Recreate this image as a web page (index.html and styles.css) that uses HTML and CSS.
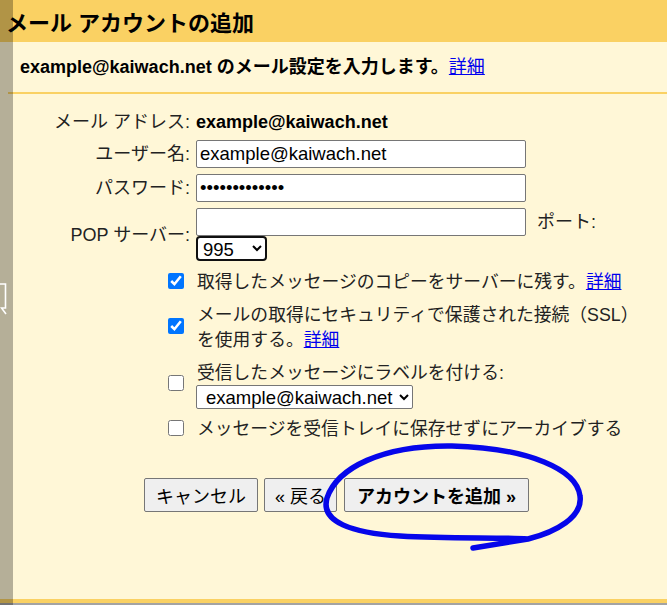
FILE: index.html
```html
<!DOCTYPE html>
<html lang="ja">
<head>
<meta charset="utf-8">
<title>メール アカウントの追加</title>
<link rel="stylesheet" href="styles.css">
</head>
<body>
<div class="page">
  <header class="title-bar"><h1>メール アカウントの追加</h1></header>
  <div class="intro">example@kaiwach.net のメール設定を入力します。<a href="#">詳細</a></div>
  <main class="content">
    <div class="fields">
      <div class="label">メール アドレス:</div>
      <div class="value">example@kaiwach.net</div>
      <label class="label" for="user">ユーザー名:</label>
      <div><input id="user" class="text" type="text" value="example@kaiwach.net"></div>
      <label class="label" for="pass">パスワード:</label>
      <div><input id="pass" class="text" type="password" value="abcdefghijklm"></div>
      <label class="label" for="server">POP サーバー:</label>
      <div class="server-cell">
        <div class="server-line"><input id="server" class="text" type="text" value=""><span class="port-label">ポート:</span></div>
        <select class="port"><option>995</option><option>110</option></select>
      </div>
    </div>
    <div class="options">
      <input class="check" type="checkbox" checked>
      <div class="opt-text">取得したメッセージのコピーをサーバーに残す。<a href="#">詳細</a></div>
      <input class="check" type="checkbox" checked>
      <div class="opt-text">メールの取得にセキュリティで保護された接続（SSL）を使用する。<a href="#">詳細</a></div>
      <input class="check" type="checkbox">
      <div class="opt-text">受信したメッセージにラベルを付ける:<select class="label-select"><option>example@kaiwach.net</option></select></div>
      <input class="check" type="checkbox">
      <div class="opt-text">メッセージを受信トレイに保存せずにアーカイブする</div>
    </div>
    <div class="actions">
      <button class="btn btn-cancel" type="button">キャンセル</button>
      <button class="btn btn-back" type="button">« 戻る</button>
      <button class="btn btn-add" type="button">アカウントを追加 »</button>
    </div>
  </main>
  <div class="footer-line"></div>
  <div class="shade">
    <svg class="shade-icon" width="13" height="40" viewBox="0 0 13 40"><path d="M0 1 H5.5 V25 H1.5 L6 31" fill="none" stroke="#ffffff" stroke-width="1.6"/></svg>
  </div>
  <svg class="annot" width="667" height="605" viewBox="0 0 667 605">
    <path d="M473 548 L528 539 C556 532 583 517 580 496 C577 470 530 448 452 446 C382 445 337 468 327 498 C320 522 352 533 400 536 C452 539 500 537 528 539" fill="none" stroke="#0606ea" stroke-width="5.5" stroke-linecap="round" stroke-linejoin="round"/>
  </svg>
</div>
</body>
</html>
```

FILE: styles.css
```css
html, body {
  margin: 0;
  padding: 0;
}
body {
  background: #fff7d7;
  font-family: "Liberation Sans", "Noto Sans CJK JP", sans-serif;
  color: #1a1a1a;
  overflow: hidden;
}
.page {
  position: relative;
  height: 605px;
  display: flex;
  flex-direction: column;
}
.title-bar {
  height: 42px;
  background: #fad163;
  box-sizing: border-box;
  padding: 5px 0 0 6px;
}
.title-bar h1 {
  margin: 0;
  font-size: 22px;
  font-weight: bold;
  line-height: 37px;
  color: #000;
}
.intro {
  margin-left: 8px;
  padding-left: 12px;
  height: 50px;
  line-height: 50px;
  font-size: 18px;
  font-weight: bold;
  color: #000;
  border-bottom: 2px solid #fad163;
}
.intro a, .opt-text a {
  color: #0000ee;
  font-weight: normal;
  text-decoration: underline;
}
.content {
  flex: 1;
}
.fields {
  display: grid;
  grid-template-columns: 190px 1fr;
  column-gap: 6px;
  row-gap: 6px;
  align-items: center;
  padding-top: 16px;
}
.label {
  text-align: right;
  font-size: 18px;
  line-height: 24px;
  color: #222;
}
.value {
  font-size: 18px;
  line-height: 24px;
  font-weight: bold;
  color: #000;
}
.text {
  box-sizing: border-box;
  width: 330px;
  height: 28px;
  margin: 0;
  padding: 0 3px;
  border: 1px solid #767676;
  border-radius: 2px;
  background: #fff;
  font-family: "Liberation Sans", "Noto Sans CJK JP", sans-serif;
  font-size: 18.5px;
  color: #000;
  display: block;
}
.server-line {
  display: flex;
  align-items: center;
  gap: 11px;
}
.port-label {
  font-size: 18px;
  line-height: 24px;
  color: #222;
}
.port {
  display: block;
  box-sizing: border-box;
  width: 71px;
  height: 25px;
  margin: 0;
  padding: 0 0 0 1px;
  border: 2px solid #101010;
  border-radius: 4px;
  background: #fff;
  font-family: "Liberation Sans", sans-serif;
  font-size: 18.5px;
  color: #000;
}
.options {
  display: grid;
  grid-template-columns: 16px 450px;
  column-gap: 13px;
  row-gap: 8px;
  padding-left: 168px;
  margin-top: 9px;
}
.check {
  width: 16px;
  height: 16px;
  margin: 0 0 4px 0;
  align-self: center;
}
.opt-text {
  font-size: 17.8px;
  line-height: 25px;
  color: #222;
}
.label-select {
  display: block;
  box-sizing: border-box;
  width: 217px;
  height: 24px;
  margin: -1px 0 0 -1px;
  padding: 0 0 0 5px;
  border: 1px solid #767676;
  border-radius: 2px;
  background: #fff;
  font-family: "Liberation Sans", sans-serif;
  font-size: 18.5px;
  color: #000;
}
.actions {
  display: flex;
  gap: 6px;
  padding-left: 144px;
  margin-top: 36px;
}
.btn {
  box-sizing: border-box;
  height: 34px;
  padding: 0 11px;
  margin: 0;
  border: 1px solid #767676;
  border-radius: 2px;
  background: #efefef;
  font-family: "Liberation Sans", "Noto Sans CJK JP", sans-serif;
  font-size: 18px;
  color: #000;
}
.btn-back {
  padding: 0 10px;
}
.btn-add {
  font-weight: bold;
  padding: 0 12px;
  margin-left: 1px;
}
.footer-line {
  height: 4px;
  background: #fad163;
  border-bottom: 2px solid #a3a3a3;
}
.shade {
  position: absolute;
  left: 0;
  top: 0;
  width: 13px;
  height: 605px;
  background: rgba(0, 0, 0, 0.29);
}
.shade-icon {
  position: absolute;
  left: 0;
  top: 283px;
}
.annot {
  position: absolute;
  left: 0;
  top: 0;
  pointer-events: none;
}
```
